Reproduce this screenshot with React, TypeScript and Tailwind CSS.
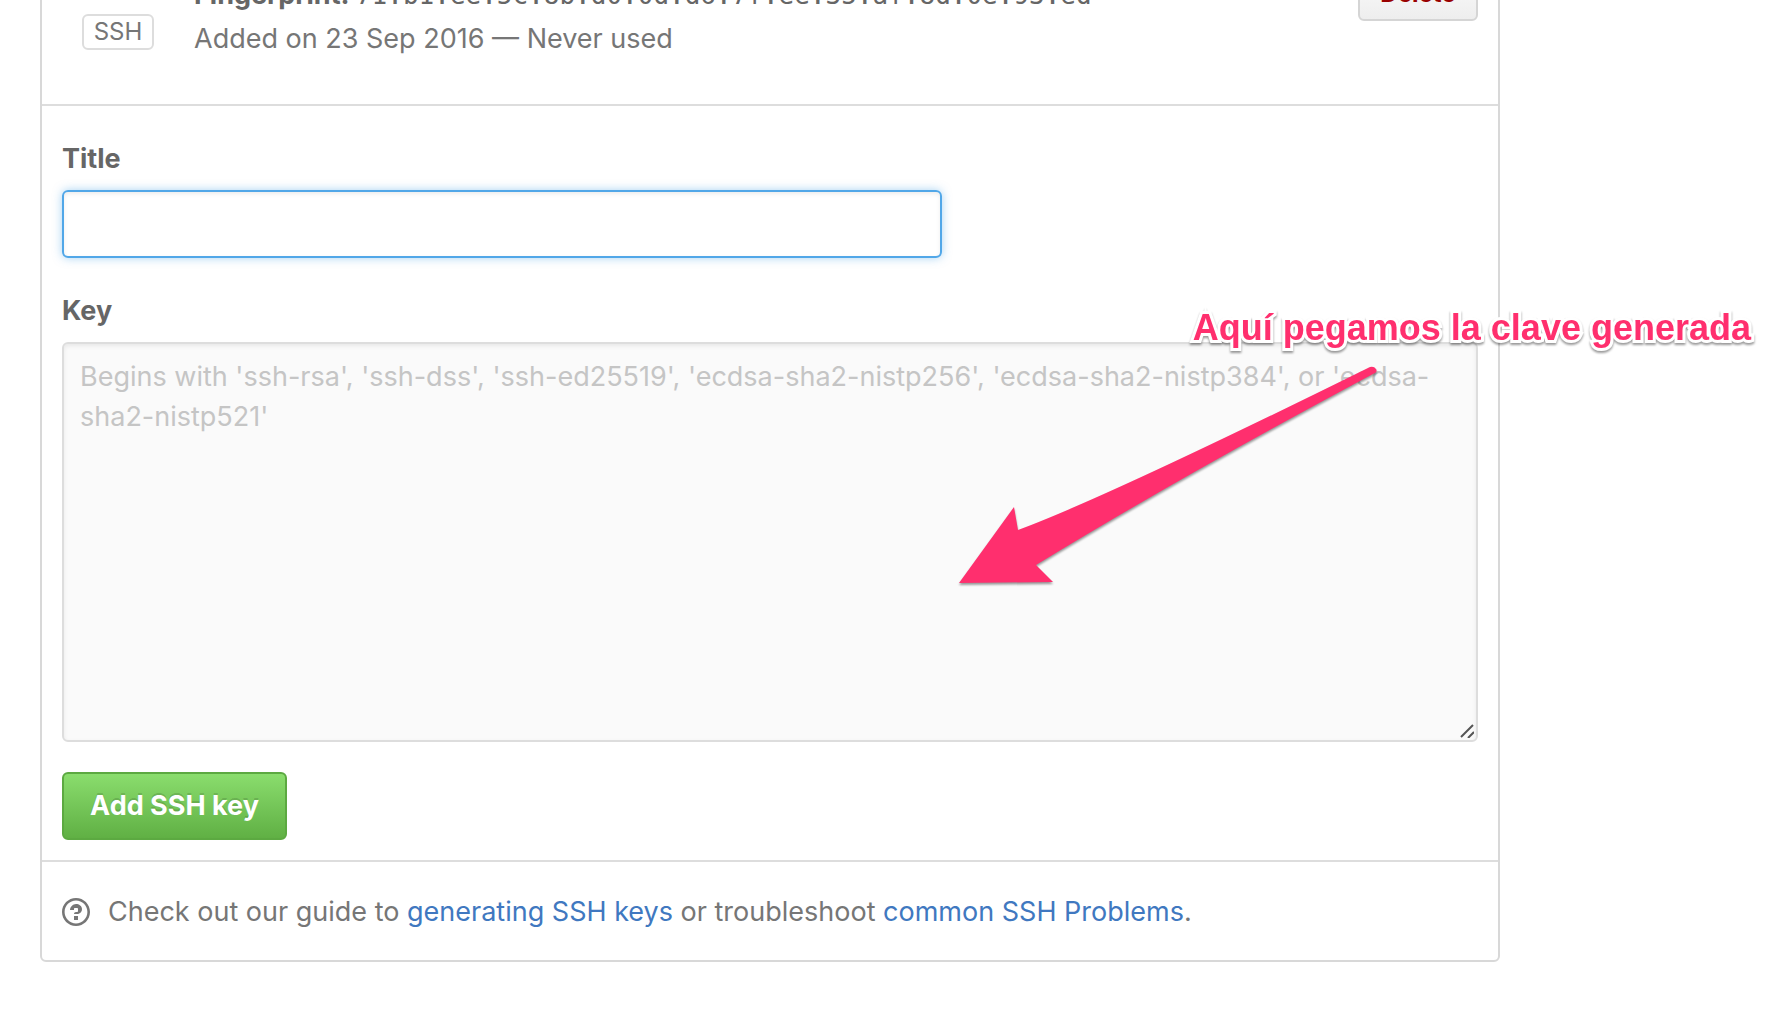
import { useState } from "react";

const FINGERPRINT = "71:b1:ee:5c:8b:d0:0d:d6:7f:ee:35:af:8d:0e:93:ed";

function KeyRow() {
  return (
    <div className="flex h-[144px] items-start border-b-2 border-[#dddddd] px-5">
      <span className="ml-5 mt-[52px] flex h-9 w-[72px] items-center justify-center rounded-md border-2 border-[#dddddd] text-2xl text-[#767676]">
        SSH
      </span>
      <div className="ml-10 mt-[13px] flex-1 text-[27px] leading-10 text-[#767676]">
        <p className="whitespace-nowrap font-bold text-[#666666]">
          Fingerprint:{" "}
          <code className="font-['DejaVu_Sans_Mono',monospace] text-[26px] font-normal">{FINGERPRINT}</code>
        </p>
        <p className="mt-1">Added on 23 Sep 2016 — Never used</p>
      </div>
      <button
        type="button"
        className="mt-[5px] h-[54px] w-[120px] rounded-md border-2 border-[#d5d5d5] bg-linear-to-b from-[#fcfcfc] to-[#eeeeee] text-2xl font-bold text-[#990000]"
      >
        Delete
      </button>
    </div>
  );
}

function KeyForm() {
  const [title, setTitle] = useState("");
  const [key, setKey] = useState("");
  return (
    <form className="border-b-2 border-[#dddddd] px-5 pb-5 pt-[33px]" onSubmit={(e) => e.preventDefault()}>
      <label htmlFor="title" className="block text-[27px] font-bold leading-10 text-[#666666]">
        Title
      </label>
      <input
        id="title"
        type="text"
        value={title}
        onChange={(e) => setTitle(e.target.value)}
        className="mt-[11px] block h-[68px] w-[880px] max-w-full rounded-md border-2 border-[#51a7e8] px-4 text-[27px] shadow-[inset_0_2px_4px_rgba(0,0,0,0.075),0_0_10px_rgba(81,167,232,0.5)] outline-none"
      />
      <label htmlFor="key" className="mt-[33px] block text-[27px] font-bold leading-10 text-[#666666]">
        Key
      </label>
      <div className="relative mt-[11px]">
        <textarea
          id="key"
          value={key}
          onChange={(e) => setKey(e.target.value)}
          placeholder="Begins with 'ssh-rsa', 'ssh-dss', 'ssh-ed25519', 'ecdsa-sha2-nistp256', 'ecdsa-sha2-nistp384', or 'ecdsa-sha2-nistp521'"
          className="block h-[400px] w-full resize-none rounded-md border-2 border-[#dddddd] bg-[#fafafa] px-4 py-[13px] text-[27px] leading-10 shadow-[inset_0_2px_4px_rgba(0,0,0,0.075)] outline-none placeholder:text-[#c5c5c5]"
        />
        <svg className="absolute bottom-1 right-1 size-3.5" viewBox="0 0 14 14" stroke="#555555" strokeWidth="2" aria-hidden="true">
          <path d="M1 13 13 1M8 14 14 8" />
        </svg>
        <Annotation />
      </div>
      <button
        type="submit"
        className="mt-[30px] block h-[68px] w-[225px] rounded-md border-2 border-[#5ca941] bg-linear-to-b from-[#8add6d] to-[#60b044] text-[27px] font-bold text-white [text-shadow:0_-2px_0_rgba(0,0,0,0.15)]"
      >
        Add SSH key
      </button>
    </form>
  );
}

function Annotation() {
  return (
    <div className="pointer-events-none absolute -right-[273px] -top-[34px] w-[801px]">
      <p className="text-right font-['Liberation_Sans',Arial,sans-serif] text-4xl font-bold leading-10 whitespace-nowrap text-[#ff2f6e] [-webkit-text-stroke:6px_white] [paint-order:stroke_fill] [filter:drop-shadow(0_2px_1px_rgba(0,0,0,0.4))]">
        Aquí pegamos la clave generada
      </p>
      <svg className="absolute left-0 top-12 h-[240px] w-[440px] overflow-visible [filter:drop-shadow(0_2px_1px_rgba(0,0,0,0.4))]" viewBox="950 356 440 240" aria-hidden="true">
        <path
          fill="#ff2f6e"
          d="M959 583 1014 507 1018 530Q1105 498 1370 367Q1374 366 1376 369Q1378 372 1373 374Q1180 477 1036 565L1053 582Z"
        />
      </svg>
    </div>
  );
}

function HelpIcon() {
  return (
    <svg className="h-8 w-7" viewBox="0 0 14 16" fill="#767676" aria-hidden="true">
      <path d="M6 10h2v2H6v-2zm4-3.5C10 8.64 8 9 8 9H6c0-.55.45-1 1-1h.5c.28 0 .5-.22.5-.5v-1c0-.28-.22-.5-.5-.5h-1c-.28 0-.5.22-.5.5V7H4c0-1.5 1.5-3 3-3s3 1 3 2.500zM7 2.300c3.140 0 5.700 2.560 5.700 5.700s-2.560 5.700-5.700 5.700A5.710 5.710 0 0 1 1.300 8c0-3.140 2.560-5.700 5.700-5.700zM7 1C3.140 1 0 4.140 0 8s3.140 7 7 7 7-3.140 7-7-3.140-7-7-7z" />
    </svg>
  );
}

export default function App() {
  return (
    <main className="min-h-screen overflow-hidden bg-white font-['Inter',sans-serif]">
      <section className="-mt-10 ml-10 mr-[278px] rounded-md border-2 border-[#d8d8d8]">
        <KeyRow />
        <KeyForm />
        <p className="flex h-[98px] items-center px-5 pt-0.5 text-[27px] text-[#767676]">
          <HelpIcon />
          <span className="ml-[18px]">
            Check out our guide to{" "}
            <a href="#generating" className="text-[#4078c0]">generating SSH keys</a> or troubleshoot{" "}
            <a href="#problems" className="text-[#4078c0]">common SSH Problems</a>.
          </span>
        </p>
      </section>
    </main>
  );
}
